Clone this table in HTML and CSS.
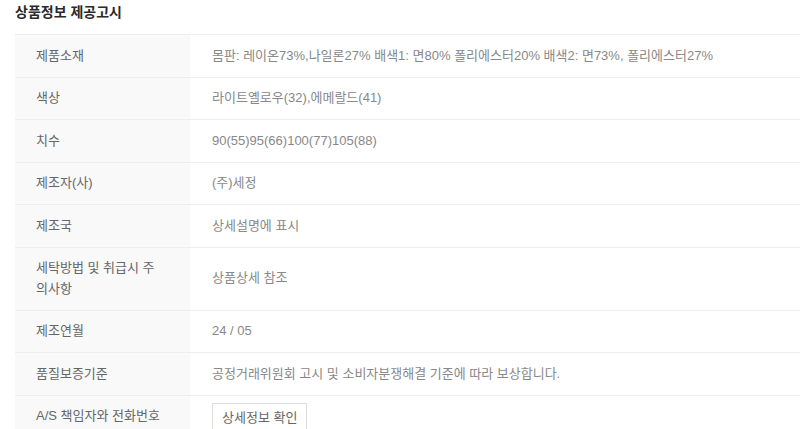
FILE: index.html
```html
<!DOCTYPE html>
<html lang="ko">
<head>
<meta charset="utf-8">
<link rel="stylesheet" href="styles.css">
</head>
<body>
<div class="notice">
  <h2 class="notice-title">상품정보 제공고시</h2>
  <table class="info-table">
    <tbody>
      <tr><th>제품소재</th><td>몸판: 레이온73%,나일론27% 배색1: 면80% 폴리에스터20% 배색2: 면73%, 폴리에스터27%</td></tr>
      <tr><th>색상</th><td>라이트옐로우(32),에메랄드(41)</td></tr>
      <tr><th>치수</th><td>90(55)95(66)100(77)105(88)</td></tr>
      <tr><th>제조자(사)</th><td>(주)세정</td></tr>
      <tr><th>제조국</th><td>상세설명에 표시</td></tr>
      <tr><th>세탁방법 및 취급시 주의사항</th><td>상품상세 참조</td></tr>
      <tr><th>제조연월</th><td>24 / 05</td></tr>
      <tr><th>품질보증기준</th><td>공정거래위원회 고시 및 소비자분쟁해결 기준에 따라 보상합니다.</td></tr>
      <tr><th>A/S 책임자와 전화번호</th><td class="btn-cell"><button class="detail-btn">상세정보 확인</button></td></tr>
    </tbody>
  </table>
</div>
</body>
</html>
```

FILE: styles.css
```css
html, body {
  margin: 0;
  padding: 0;
  background: #fff;
}
body {
  font-family: "Liberation Sans", "Noto Sans CJK KR", sans-serif;
  overflow: hidden;
}
.notice {
  padding: 0 0 0 15px;
}
.notice-title {
  margin: 0;
  padding-top: 2px;
  height: 32px;
  font-size: 14px;
  line-height: 20px;
  font-weight: 700;
  color: #2a2a2a;
}
.info-table {
  width: 100%;
  border-collapse: collapse;
  border-top: 1px solid #eee;
}
.info-table th,
.info-table td {
  font-size: 13px;
  line-height: 20.5px;
  height: 20.5px;
  padding: 10.5px 28px 10.5px 21px;
  border-bottom: 1px solid #eee;
  text-align: left;
  vertical-align: middle;
  font-weight: 400;
}
.info-table th {
  width: 126px;
  background: #f9f9f9;
  color: #666;
}
.info-table td {
  color: #888;
  padding-left: 22px;
}
.info-table td.btn-cell {
  padding-top: 7px;
  padding-bottom: 0;
  vertical-align: top;
}
.detail-btn {
  display: block;
  font-family: inherit;
  font-size: 13px;
  line-height: 18px;
  color: #666;
  background: #fff;
  border: 1px solid #ddd;
  padding: 5px 9px 6px;
  margin: 0;
}
```
